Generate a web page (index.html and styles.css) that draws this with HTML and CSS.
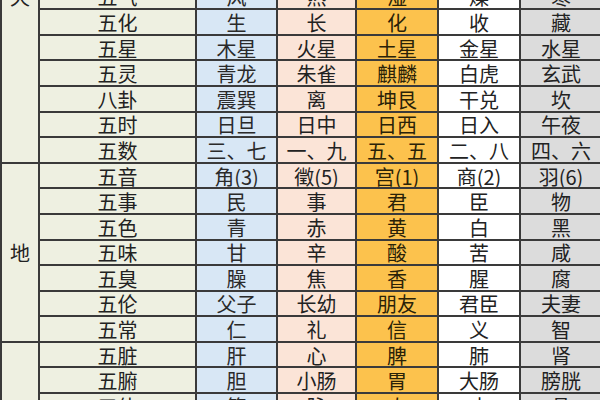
FILE: index.html
```html
<!DOCTYPE html>
<html lang="zh-CN">
<head>
<meta charset="utf-8">
<title>五行对照表</title>
<link rel="stylesheet" href="styles.css">
</head>
<body>
<div class="viewport">
<table class="wx">
<colgroup>
<col class="c-grp"><col class="c-lbl"><col class="c-mu"><col class="c-huo"><col class="c-tu"><col class="c-jin"><col class="c-shui">
</colgroup>
<tbody>
<tr><td class="grp" rowspan="13">天</td><td class="lbl">五行</td><td class="mu">木</td><td class="huo">火</td><td class="tu">土</td><td class="jin">金</td><td class="shui">水</td></tr>
<tr><td class="lbl">天干</td><td class="mu">甲乙</td><td class="huo">丙丁</td><td class="tu">戊己</td><td class="jin">庚辛</td><td class="shui">壬癸</td></tr>
<tr><td class="lbl">地支</td><td class="mu">寅卯</td><td class="huo">巳午</td><td class="tu">辰戌丑未</td><td class="jin">申酉</td><td class="shui">亥子</td></tr>
<tr><td class="lbl">五方</td><td class="mu">东</td><td class="huo">南</td><td class="tu">中</td><td class="jin">西</td><td class="shui">北</td></tr>
<tr><td class="lbl">五季</td><td class="mu">春</td><td class="huo">夏</td><td class="tu">长夏</td><td class="jin">秋</td><td class="shui">冬</td></tr>
<tr><td class="lbl">五色</td><td class="mu">青</td><td class="huo">赤</td><td class="tu">黄</td><td class="jin">白</td><td class="shui">黑</td></tr>
<tr><td class="lbl">五气</td><td class="mu">风</td><td class="huo">热</td><td class="tu">湿</td><td class="jin">燥</td><td class="shui">寒</td></tr>
<tr><td class="lbl">五化</td><td class="mu">生</td><td class="huo">长</td><td class="tu">化</td><td class="jin">收</td><td class="shui">藏</td></tr>
<tr><td class="lbl">五星</td><td class="mu">木星</td><td class="huo">火星</td><td class="tu">土星</td><td class="jin">金星</td><td class="shui">水星</td></tr>
<tr><td class="lbl">五灵</td><td class="mu">青龙</td><td class="huo">朱雀</td><td class="tu">麒麟</td><td class="jin">白虎</td><td class="shui">玄武</td></tr>
<tr><td class="lbl">八卦</td><td class="mu">震巽</td><td class="huo">离</td><td class="tu">坤艮</td><td class="jin">干兑</td><td class="shui">坎</td></tr>
<tr><td class="lbl">五时</td><td class="mu">日旦</td><td class="huo">日中</td><td class="tu">日西</td><td class="jin">日入</td><td class="shui">午夜</td></tr>
<tr><td class="lbl">五数</td><td class="mu">三、七</td><td class="huo">一、九</td><td class="tu">五、五</td><td class="jin">二、八</td><td class="shui">四、六</td></tr>

<tr><td class="grp" rowspan="7">地</td><td class="lbl">五音</td><td class="mu">角(3)</td><td class="huo">徵(5)</td><td class="tu">宫(1)</td><td class="jin">商(2)</td><td class="shui">羽(6)</td></tr>
<tr><td class="lbl">五事</td><td class="mu">民</td><td class="huo">事</td><td class="tu">君</td><td class="jin">臣</td><td class="shui">物</td></tr>
<tr><td class="lbl">五色</td><td class="mu">青</td><td class="huo">赤</td><td class="tu">黄</td><td class="jin">白</td><td class="shui">黑</td></tr>
<tr><td class="lbl">五味</td><td class="mu">甘</td><td class="huo">辛</td><td class="tu">酸</td><td class="jin">苦</td><td class="shui">咸</td></tr>
<tr><td class="lbl">五臭</td><td class="mu">臊</td><td class="huo">焦</td><td class="tu">香</td><td class="jin">腥</td><td class="shui">腐</td></tr>
<tr><td class="lbl">五伦</td><td class="mu">父子</td><td class="huo">长幼</td><td class="tu">朋友</td><td class="jin">君臣</td><td class="shui">夫妻</td></tr>
<tr><td class="lbl">五常</td><td class="mu">仁</td><td class="huo">礼</td><td class="tu">信</td><td class="jin">义</td><td class="shui">智</td></tr>

<tr><td class="grp" rowspan="8">人</td><td class="lbl">五脏</td><td class="mu">肝</td><td class="huo">心</td><td class="tu">脾</td><td class="jin">肺</td><td class="shui">肾</td></tr>
<tr><td class="lbl">五腑</td><td class="mu">胆</td><td class="huo">小肠</td><td class="tu">胃</td><td class="jin">大肠</td><td class="shui">膀胱</td></tr>
<tr><td class="lbl">五体</td><td class="mu">筋</td><td class="huo">脉</td><td class="tu">肉</td><td class="jin">皮</td><td class="shui">骨</td></tr>
<tr><td class="lbl">五官</td><td class="mu">目</td><td class="huo">舌</td><td class="tu">口</td><td class="jin">鼻</td><td class="shui">耳</td></tr>
<tr><td class="lbl">五志</td><td class="mu">怒</td><td class="huo">喜</td><td class="tu">思</td><td class="jin">悲</td><td class="shui">恐</td></tr>
<tr><td class="lbl">五液</td><td class="mu">泪</td><td class="huo">汗</td><td class="tu">涎</td><td class="jin">涕</td><td class="shui">唾</td></tr>
<tr><td class="lbl">五声</td><td class="mu">呼</td><td class="huo">笑</td><td class="tu">歌</td><td class="jin">哭</td><td class="shui">呻</td></tr>
<tr><td class="lbl">五华</td><td class="mu">爪</td><td class="huo">面</td><td class="tu">唇</td><td class="jin">毛</td><td class="shui">发</td></tr>
</tbody>
</table>
</div>
</body>
</html>
```

FILE: styles.css
```css
html, body {
  margin: 0;
  padding: 0;
  background: #ffffff;
}

.viewport {
  width: 600px;
  height: 400px;
  overflow: hidden;
}

.wx {
  width: 601px;
  margin-top: -171px;
  margin-left: 0;
  border-collapse: collapse;
  table-layout: fixed;
  font-family: "Noto Sans CJK SC", "Noto Sans", sans-serif;
  font-size: 20px;
  color: #222222;
}

.c-grp { width: 38px; }
.c-lbl { width: 157px; }
.c-mu { width: 81px; }
.c-huo { width: 79px; }
.c-tu { width: 82px; }
.c-jin { width: 82px; }
.c-shui { width: 82px; }

.wx tr {
  height: 25.6px;
}

.wx td {
  border: 2px solid #3a3a3a;
  padding: 0;
  text-align: center;
  vertical-align: middle;
  line-height: 20px;
  white-space: nowrap;
  overflow: hidden;
  padding-top: 2px;
}

.grp,
.lbl {
  background: #eef0e1;
}

.grp {
  border-left-width: 1px;
}

.mu { background: #d8e7f5; color: #2a2a2a; }
.huo { background: #fbe4d7; }
.tu { background: #fcc24d; color: #2a2208; }
.jin { background: #ffffff; }
.shui { background: #dcdcdc; }
```
